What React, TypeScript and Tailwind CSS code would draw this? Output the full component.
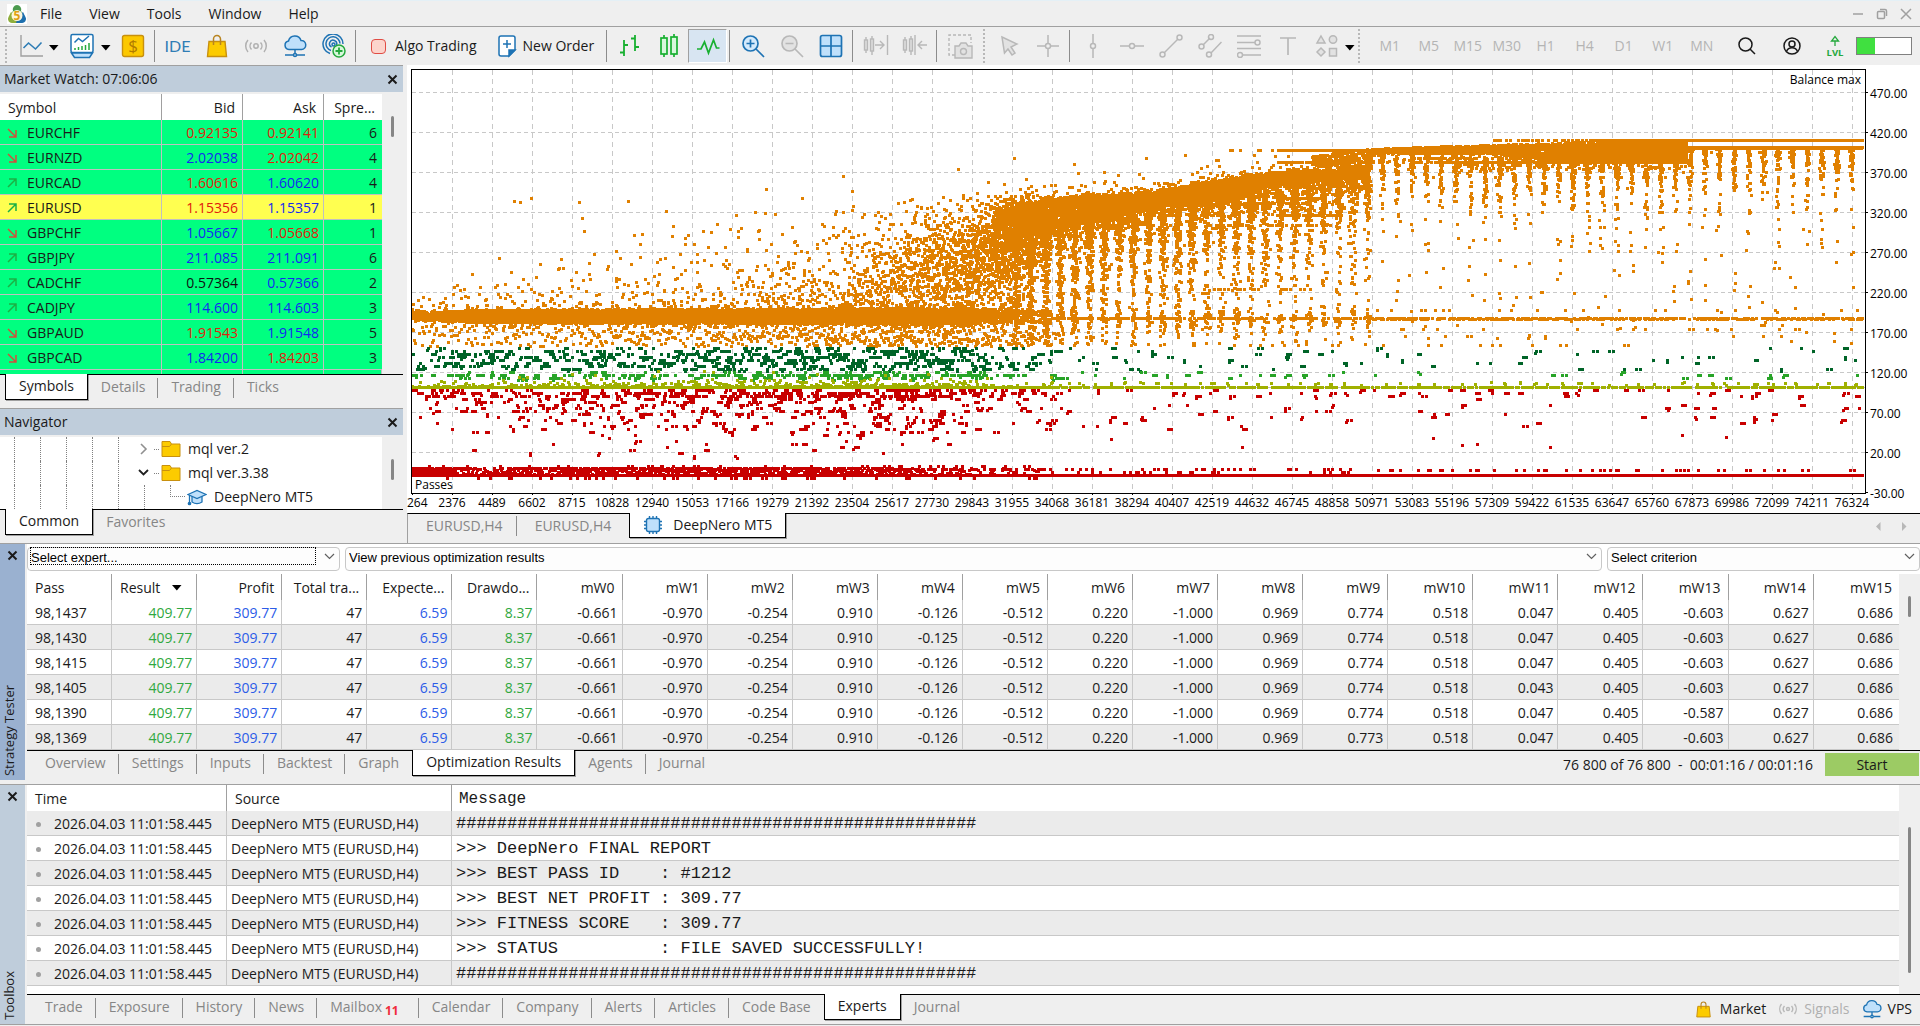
/* ============================================================
   Trading terminal workspace: market watch, navigator,
   optimization chart, strategy tester and toolbox panels.
   ============================================================ */
import { useMemo } from "react";
import type { ReactNode } from "react";

// ── Data ──────────────────────────────────────────────────────
const MENU = ["File", "View", "Tools", "Window", "Help"];
const TIMEFRAMES = ["M1", "M5", "M15", "M30", "H1", "H4", "D1", "W1", "MN"];

type Dir = "up" | "down";
type Tone = "r" | "b" | "k";
const SYMBOLS: [string, Dir, string, Tone, string, Tone, number][] = [
  ["EURCHF", "down", "0.92135", "r", "0.92141", "r", 6],
  ["EURNZD", "down", "2.02038", "b", "2.02042", "r", 4],
  ["EURCAD", "up", "1.60616", "r", "1.60620", "b", 4],
  ["EURUSD", "up", "1.15356", "r", "1.15357", "b", 1],
  ["GBPCHF", "down", "1.05667", "b", "1.05668", "r", 1],
  ["GBPJPY", "up", "211.085", "b", "211.091", "b", 6],
  ["CADCHF", "up", "0.57364", "k", "0.57366", "b", 2],
  ["CADJPY", "up", "114.600", "b", "114.603", "b", 3],
  ["GBPAUD", "down", "1.91543", "r", "1.91548", "b", 5],
  ["GBPCAD", "down", "1.84200", "b", "1.84203", "r", 3],
];
const TONES: Record<Tone, string> = { r: "text-[#e0200c]", b: "text-[#1428f0]", k: "text-[#101010]" };

const PASS_COLUMNS = ["Profit", "Total tra...", "Expecte...", "Drawdo..."];
const WEIGHTS = ["-0.661", "-0.970", "-0.254", "0.910", "-0.126", "-0.512", "0.220", "-1.000", "0.969", "0.774", "0.518", "0.047", "0.405", "-0.603", "0.627", "0.686"];
const PASSES: { id: string; changed: Record<number, string> }[] = [
  { id: "98,1437", changed: {} },
  { id: "98,1430", changed: { 4: "-0.125" } },
  { id: "98,1415", changed: {} },
  { id: "98,1405", changed: { 11: "0.043" } },
  { id: "98,1390", changed: { 13: "-0.587" } },
  { id: "98,1369", changed: { 9: "0.773" } },
];

const HASHES = "#".repeat(51);
const LOG = [
  HASHES,
  ">>> DeepNero FINAL REPORT",
  ">>> BEST PASS ID    : #1212",
  ">>> BEST NET PROFIT : 309.77",
  ">>> FITNESS SCORE   : 309.77",
  ">>> STATUS          : FILE SAVED SUCCESSFULLY!",
  HASHES,
];

const X_LABELS = [264, 2376, 4489, 6602, 8715, 10828, 12940, 15053, 17166, 19279, 21392, 23504, 25617, 27730, 29843, 31955, 34068, 36181, 38294, 40407, 42519, 44632, 46745, 48858, 50971, 53083, 55196, 57309, 59422, 61535, 63647, 65760, 67873, 69986, 72099, 74211, 76324];
const Y_LABELS = [470, 420, 370, 320, 270, 220, 170, 120, 70, 20, -30];

// ── Scatter data ──────────────────────────────────────────────
function makeRng(seed: number) {
  let a = seed;
  return () => {
    a = (a + 0x6d2b79f5) | 0;
    let t = Math.imul(a ^ (a >>> 15), 1 | a);
    t = (t + Math.imul(t ^ (t >>> 7), 61 | t)) ^ t;
    return ((t ^ (t >>> 14)) >>> 0) / 4294967296;
  };
}

// piecewise linear lookup
function at(points: [number, number][], x: number): number {
  if (x <= points[0][0]) return points[0][1];
  for (let i = 1; i < points.length; i++) {
    const [x1, y1] = points[i];
    const [x0, y0] = points[i - 1];
    if (x <= x1) return y0 + ((y1 - y0) * (x - x0)) / (x1 - x0);
  }
  return points[points.length - 1][1];
}

const PLOT_W = 1451;
const COMB = 14.65;

function buildScatter(): Record<string, string> {
  const rnd = makeRng(98143);
  const gauss = () => rnd() + rnd() + rnd() + rnd() - 2;
  const expo = () => -Math.log(1 - rnd() * 0.999);
  const seen = new Set<string>();
  const paths: Record<string, string[]> = { orange: [], dark: [], green: [], olive: [], red: [] };

  const dot = (x: number, v: number, force?: string) => {
    const px = Math.round(x);
    if (px < 0 || px > PLOT_W) return;
    const key = force ?? (v >= 151 ? "orange" : v >= 121 ? "dark" : v >= 111 ? "green" : v > 100 ? "olive" : "red");
    const py = Math.round(27 + (470 - v) * 0.8) - 1;
    const id = `${key}${px},${py}`;
    if (seen.has(id)) return;
    seen.add(id);
    paths[key].push(`M${px + 4} ${py}h3v3h-3z`);
  };
  const line = (from: number, to: number, v: number, fill: number, force?: string) => {
    for (let x = from; x < to; x += 2) if (rnd() < fill) dot(x, v, force);
  };
  // short runs of neighbouring passes that ended on the same balance
  const clump = (x: number, v: number, force?: string) => {
    const level = Math.round(v / 3.75) * 3.75;
    dot(x, level, force);
    if (rnd() < 0.55) dot(x + 2 + rnd() * 2, level, force);
    if (rnd() < 0.25) dot(x + gauss() * 2, level - 3, force);
  };

  // Base band around 190
  for (let x = 0; x < 640; x++) {
    const n = at([[0, 4], [30, 5], [38, 12], [520, 14], [560, 8], [600, 3], [640, 1]], x);
    const half = at([[0, 6], [35, 6], [60, 8], [300, 9], [500, 10], [640, 9]], x);
    for (let i = 0; i < n; i++) dot(x, 190 + (rnd() * 2 - 1) * half);
    if (x < 560) dot(x, 190 + gauss() * 13);
  }

  // Upper cloud, taller and denser towards the convergence point
  for (let x = 0; x < 620; x++) {
    const n = at([[0, 0.3], [60, 0.6], [200, 0.9], [300, 1.5], [400, 2.8], [480, 4.5], [560, 6.5], [600, 5.5], [620, 3]], x);
    const scale = at([[0, 18], [150, 28], [300, 38], [420, 48], [520, 64], [620, 85]], x);
    const top = at([[0, 280], [120, 332], [450, 332], [600, 350]], x);
    const count = Math.floor(n + rnd());
    for (let i = 0; i < count; i++) {
      const v = 192 + expo() * scale;
      if (v < top) dot(x + rnd() * 3, v);
    }
  }
  for (let x = 430; x < 640; x++) {
    const n = at([[430, 0.3], [480, 1.6], [540, 6], [590, 13], [615, 12], [640, 6]], x);
    const c = at([[430, 232], [500, 250], [550, 265], [590, 286], [640, 305]], x);
    const top = at([[430, 330], [600, 342], [640, 342]], x);
    for (let i = 0; i < n; i++) {
      const v = c + gauss() * 48;
      if (v < top) dot(x, v);
    }
  }
  [[102, 334], [108, 333], [119, 337], [167, 333], [216, 334], [254, 321], [354, 349], [431, 365], [440, 346], [390, 337], [546, 374], [602, 387], [576, 357], [592, 355], [614, 361], [662, 380], [734, 387], [666, 369], [692, 370]].forEach(([x, v]) => dot(x, v));

  // Ridge climbing to the plateau
  for (let x = 580; x < 957; x++) {
    const top = at([[580, 320], [610, 332], [660, 340], [740, 346], [790, 357], [860, 370], [957, 375]], x);
    const low = at([[580, 292], [620, 296], [700, 312], [750, 328], [820, 338], [860, 355], [957, 364]], x);
    const n = (top - low) * at([[580, 0.14], [620, 0.35], [680, 0.6], [957, 0.75]], x);
    for (let i = 0; i < n; i++) dot(x, low + rnd() * (top - low));
    if (rnd() < 0.5) dot(x, top + expo() * 7);
    for (let i = 0; i < 3; i++) if (rnd() < 0.75) dot(x, low - expo() * 13);
  }
  line(640, 700, 334, 0.9);
  line(690, 860, 340, 0.95);
  line(700, 900, 331, 0.6);
  line(865, 915, 337, 0.95);
  line(865, 930, 316, 0.95);
  line(735, 830, 316, 0.35);
  line(800, 920, 304, 0.4);
  line(750, 900, 224, 0.28);
  line(850, 957, 352, 0.75);

  // Plateau lines
  line(810, 866, 398, 0.25);
  line(866, 1114, 398, 0.97);
  line(866, 957, 383, 0.9);
  line(957, 1030, 383, 0.35);
  line(1030, 1275, 383, 0.95);
  line(1000, 1200, 388, 0.45);
  for (let x = 900; x < 1275; x++) {
    const top = at([[900, 390], [940, 398], [1000, 401], [1110, 405], [1200, 409], [1275, 409]], x);
    const low = at([[900, 378], [957, 372], [960, 394], [1080, 393], [1150, 384], [1275, 384]], x);
    const n = x < 957 ? 5 : at([[957, 8], [1120, 9], [1180, 12], [1275, 24]], x);
    for (let i = 0; i < n; i++) dot(x, low + rnd() * (top - low));
    if (x > 1040 && rnd() < 0.5) dot(x, 378 + gauss() * 6);
    if (x > 957 && x < 1200 && rnd() < 0.4) dot(x, 383 + rnd() * 12);
  }
  for (let x = 1205; x < 1275; x++) for (let v = 396; v < 410; v += 3) dot(x, v);
  line(1080, 1180, 410, 0.5);
  line(1180, PLOT_W, 410, 1);
  line(1060, PLOT_W, 401, 1);
  line(1275, PLOT_W, 400, 1);
  line(1275, PLOT_W, 395, 0.08);
  line(957, 1300, 364, 0.1);

  // Comb of restarts hanging below the ridge
  for (let c = 0; ; c++) {
    const cx = 604 + c * COMB;
    if (cx > PLOT_W + 2) break;
    const x = Math.min(cx, PLOT_W - 1);
    const ridge = at([[600, 300], [700, 318], [800, 338], [950, 362], [960, 392], [1270, 384], [1275, 400], [1451, 400]], x);
    const dense = x < 957 ? at([[600, 160], [700, 130], [850, 90], [957, 65]], x) : 44;
    const fall = x < 957 ? at([[600, 60], [760, 40], [957, 32]], x) : 24;
    const reach = 0.7 + rnd() * 0.6;
    for (let i = 0; i < dense; i++) {
      const v = ridge - expo() * fall * reach;
      if (v > 155) dot(x + gauss() * (x < 957 ? 3.4 : 1.8), v);
    }
    const spread = x < 957 ? at([[600, 40], [957, 22]], x) : 6;
    for (let i = 0; i < spread; i++) dot(x + gauss() * 2.8, 153 + rnd() * (ridge - 155));
    if (x < 957) for (let i = 0; i < 10; i++) dot(x + gauss() * 3, 187 + gauss() * 10);
  }

  // Lower orange fringe
  for (let x = 0; x < 650; x++) {
    const n = at([[0, 0.6], [300, 1], [540, 1.9], [600, 1.2], [650, 0.4]], x);
    const count = Math.floor(n + rnd());
    for (let i = 0; i < count; i++) dot(x, 152 + rnd() * 28);
  }
  line(640, PLOT_W, 187, 0.72);
  line(957, PLOT_W, 186, 0.6);
  line(957, PLOT_W, 174, 0.09);
  line(957, PLOT_W, 198, 0.06);
  line(740, 1300, 154, 0.04);
  line(957, 1400, 165, 0.04);

  // Values between 100 and 150, then the losing passes
  for (let x = 0; x < 650; x++) {
    const k = at([[0, 0.6], [70, 0.8], [200, 1], [300, 1.15], [450, 1.5], [540, 1.3], [590, 0.75], [650, 0.25]], x);
    if (rnd() < k * 0.72) clump(x, 123 + rnd() * 27, "dark");
    if (rnd() < k * 0.3) clump(x, 113 + rnd() * 6, "green");
    if (rnd() < k * 0.6) dot(x, 101 + expo() * 3.5, "olive");
    if (rnd() < k * 0.16) clump(x, 98 - rnd() * 9, "red");
    if (rnd() < k * 0.5) {
      const v = 98 - expo() * 24;
      if (v > 8) clump(x, v, "red");
    }
    if (rnd() < k * 0.22) clump(x, 96 - rnd() * 52, "red");
  }
  for (let c = 0; c < 56; c++) {
    const x = 640 + c * COMB;
    const fade = c < 22 ? 1 : 0.7;
    for (let i = 0; i < 2; i++) {
      if (rnd() < 0.6 * fade) clump(x + gauss() * 3, 123 + rnd() * 27, "dark");
      if (rnd() < 0.4 * fade) clump(x + gauss() * 3, 113 + rnd() * 6, "green");
      if (rnd() < 0.7) dot(x + gauss() * 3, 104 + rnd() * 3, "olive");
      if (rnd() < 0.6 * fade) clump(x + gauss() * 3, 98 - rnd() * 10, "red");
      if (rnd() < 0.6 * fade) clump(x + gauss() * 3, 80 - rnd() * 30, "red");
    }
    if (rnd() < 0.14) dot(x, 25 + rnd() * 20);
  }
  line(0, 640, 101, 1, "olive");
  line(640, PLOT_W, 101, 0.86, "olive");

  // Floor
  for (let x = 0; x < 640; x++) {
    const n = at([[0, 9], [40, 9], [44, 0.9], [140, 1.1], [300, 1.3], [500, 1.1], [560, 0.4], [640, 0.1]], x);
    const count = Math.floor(n + rnd());
    for (let i = 0; i < count; i++) dot(x, 0 - rnd() * 9);
    if (rnd() < 0.06) dot(x, 3);
    if (rnd() < 0.06) dot(x, -12);
  }
  line(0, 480, 0, 0.75);
  line(480, 640, -1, 0.5);
  line(640, 960, -1, 0.25);
  line(960, PLOT_W, -3, 0.24);
  line(640, 960, -5, 0.16);
  line(0, PLOT_W, -9, 1);
  line(1, PLOT_W, -9, 0.7);

  return Object.fromEntries(Object.entries(paths).map(([k, list]) => [k, list.join("")]));
}

function OptimizationChart() {
  const scatter = useMemo(buildScatter, []);
  return (
    <svg viewBox="0 0 1513 448" className="block h-auto w-full bg-white font-['Open_Sans',sans-serif]" role="img" aria-label="Optimization results">
      <g stroke="#c8c8c8" shapeRendering="crispEdges">
        {X_LABELS.slice(1).map((n, i) => (
          <line key={n} x1={45.5 + i * 40} x2={45.5 + i * 40} y1={5} y2={428} strokeDasharray="5 4" />
        ))}
        {Y_LABELS.slice(0, 10).map((n, i) => (
          <line key={n} x1={5} x2={1459} y1={27.5 + i * 40} y2={27.5 + i * 40} strokeDasharray="4 3" />
        ))}
        <line x1={5} x2={1459} y1={322.5} y2={322.5} stroke="#c0b8c8" />
      </g>
      <g shapeRendering="crispEdges">
        <path d={scatter.orange} fill="#e08000" />
        <path d={scatter.dark} fill="#006428" />
        <path d={scatter.green} fill="#28a428" />
        <path d={scatter.red} fill="#c80000" />
        <path d={scatter.olive} fill="#a0b000" />
      </g>
      <g stroke="#000" shapeRendering="crispEdges">
        <path d="M4.5 4.5H1458.5V428.5H4.5Z" fill="none" />
        {X_LABELS.map((n, i) => <path key={n} d={`M${5.5 + i * 40} 428v2`} />)}
        {Y_LABELS.map((n, i) => <path key={n} d={`M1459 ${27.5 + i * 40}h2`} />)}
      </g>
      <g fill="#000" fontSize={12}>
        <text x={1454} y={19} textAnchor="end">Balance max</text>
        <text x={8} y={424}>Passes</text>
        <text x={0} y={442}>{X_LABELS[0]}</text>
        {X_LABELS.slice(1).map((n, i) => <text key={n} x={45 + i * 40} y={442} textAnchor="middle">{n}</text>)}
        {Y_LABELS.map((n, i) => <text key={n} x={1463} y={33 + i * 40}>{n.toFixed(2)}</text>)}
      </g>
    </svg>
  );
}

// ── Icons ─────────────────────────────────────────────────────
function Svg({ w = 24, h = 24, children, stroke = "#b8b8b8", fill = "none", sw = 1.4 }: {
  w?: number; h?: number; children: ReactNode; stroke?: string; fill?: string; sw?: number;
}) {
  return (
    <svg width={w} height={h} viewBox={`0 0 ${w} ${h}`} fill={fill} stroke={stroke} strokeWidth={sw} className="shrink-0" aria-hidden="true">
      {children}
    </svg>
  );
}

function Logo() {
  return (
    <Svg w={20} h={20} stroke="none">
      <rect width="20" height="20" fill="#fff" />
      <path d="M10 1a4.500 4.500 0 0 1 4 6l3 4-4 2-7 0-3-2 3-4a4.500 4.500 0 0 1 4-6z" fill="#4b9a4e" />
      <path d="M4 8l-2.500 5a4 4 0 0 0 4 6h5l-1-6z" fill="#8fae3c" />
      <path d="M16 8l2.500 5a4 4 0 0 1-4 6H9l2-6z" fill="#1d6fae" />
      <circle cx="10" cy="11.500" r="5.500" fill="#fdf6dc" />
      <text x="10" y="16" textAnchor="middle" fontSize="12" fontWeight="700" fill="#e0a010">5</text>
    </Svg>
  );
}

function CloseIcon() {
  return <Svg w={11} h={11} stroke="#1a1a1a" sw={2}><path d="M1.500 1.500l8 8M9.500 1.500l-8 8" /></Svg>;
}

function Bag({ size = 24 }: { size?: number }) {
  return (
    <svg width={size} height={size} viewBox="0 0 24 24" className="shrink-0" aria-hidden="true">
      <path d="M4 7.500h16l1.500 15h-19z" fill="#fccb00" stroke="#c8900e" strokeWidth="1.400" />
      <path d="M8.500 11V5a3.500 3.500 0 0 1 7 0v6" fill="none" stroke="#b88420" strokeWidth="1.500" />
    </svg>
  );
}

function Signal() {
  return (
    <Svg stroke="#b0b0b0" sw={1.500}>
      <circle cx="12" cy="12" r="2.200" />
      <path d="M7.500 8.500a5 5 0 0 0 0 7M16.500 8.500a5 5 0 0 1 0 7M4 6a9 9 0 0 0 0 12M20 6a9 9 0 0 1 0 12" />
    </Svg>
  );
}

function Cloud() {
  return (
    <Svg stroke="#1e73b4" sw={1.500}>
      <path d="M6 15.500a4.300 4.300 0 0 1-.5-8.500 6.500 6.500 0 0 1 12.500-.5 4.500 4.500 0 0 1 .5 9z" fill="#bfe0fb" />
      <path d="M12 15.500v4M2 21h8M14 21h8" />
      <circle cx="12" cy="21" r="1.500" />
    </Svg>
  );
}

function Caret() {
  return <Svg w={10} h={6} stroke="none" fill="#000"><path d="M0 0h9.500L4.800 5.500z" /></Svg>;
}

function Folder() {
  return (
    <Svg w={20} h={18} stroke="#c8900e" sw={1}>
      <path d="M1 1.500h8l1.500 2.500H19v12.500H1z" fill="#fccb00" />
      <path d="M1 6.500h7.500L10.500 4" />
    </Svg>
  );
}

// ── Shared parts ──────────────────────────────────────────────
function ToolButton({ label, children, wide = "w-[39px]", on }: { label: string; children: ReactNode; wide?: string; on?: boolean }) {
  return (
    <button
      aria-label={label}
      className={`flex h-[34px] shrink-0 items-center justify-center ${wide} ${on ? "border-b border-l border-r border-t border-b-white border-l-[#a0a0a0] border-r-white border-t-[#a0a0a0] bg-[#d8e5f2]" : ""}`}
    >
      {children}
    </button>
  );
}

function Divider() {
  return <span className="mx-0.5 h-8 w-0.5 shrink-0 border-l border-[#8c8c8c]" />;
}

function Grip() {
  return <span className="mx-1 h-[34px] w-0 shrink-0 border-l-2 border-dotted border-[#b8b8b8]" />;
}

function Tabs({ items, active, height, badge, end }: {
  items: string[]; active: number; height: string; badge?: Record<string, number>; end?: ReactNode;
}) {
  return (
    <div className={`flex items-start justify-between border-t border-black bg-[#efefef] ${height}`}>
      <div className="flex pl-[5px]" role="tablist">
        {items.map((t, i) =>
          i === active ? (
            <button key={t} role="tab" aria-selected="true" className="-mt-px h-[26px] border-x border-b border-black bg-white px-[13px] pb-0.5 text-sm/5 shadow-[1px_1px_0_#a0a0a0]">
              {t}
            </button>
          ) : (
            <button key={t} role="tab" aria-selected="false" className="relative mt-[3px] flex h-5 items-center pb-0.5 text-sm/5 text-[#868686]">
              <span className="px-[13px]">{t}</span>
              {badge?.[t] && <span className="-ml-2.5 mr-5 mt-2 text-xs font-bold text-[#f02c3c]">{badge[t]}</span>}
              {i + 1 !== active && i + 1 < items.length && <span className="absolute right-0 top-0 h-5 w-px bg-[#8c8c8c]" />}
            </button>
          ),
        )}
      </div>
      {end}
    </div>
  );
}

function PanelTitle({ title }: { title: string }) {
  return (
    <div className="flex h-[27px] items-center justify-between border-t border-[#a0a0a0] bg-[#bfcddb] pl-1 pr-[5px] text-sm">
      <h2>{title}</h2>
      <button aria-label={`Close ${title}`}><CloseIcon /></button>
    </div>
  );
}

function Scroll({ thumb }: { thumb: string }) {
  return (
    <div className="flex w-[21px] shrink-0 justify-center bg-[#efefef]">
      <span className={`w-[3px] rounded-full bg-[#868686] ${thumb}`} />
    </div>
  );
}

function SideTitle({ title, color }: { title: string; color: string }) {
  return (
    <div className={`flex w-[25px] shrink-0 flex-col items-center justify-between pb-1 pt-1.5 ${color}`}>
      <button aria-label={`Close ${title}`}><CloseIcon /></button>
      <h2 className="rotate-180 self-start text-[13px] [writing-mode:vertical-rl]">{title}</h2>
    </div>
  );
}

function Combo({ label, focused }: { label: string; focused?: boolean }) {
  return (
    <div className="relative h-6">
      <select aria-label={label} className="h-full w-full appearance-none rounded-sm border border-[#c8c8c8] bg-[#fdfdfd] px-[3px] pb-0.5 font-['Liberation_Sans',Arial,sans-serif] text-[13px] text-black outline-none">
        <option>{label}</option>
      </select>
      {focused && <span className="pointer-events-none absolute bottom-[3px] left-[3px] right-6 top-[3px] border border-dotted border-black" />}
      <span className="pointer-events-none absolute right-[5px] top-[9px]">
        <Svg w={11} h={7} stroke="#606060" sw={1.200}><path d="M1 1l4.500 4.500L10 1" /></Svg>
      </span>
    </div>
  );
}

// ── Toolbar ───────────────────────────────────────────────────
function Toolbar() {
  return (
    <div className="flex h-[38px] items-center bg-[#efefef] pl-px">
      <Grip />
      <ToolButton label="Charts">
        <Svg><path d="M2 1v21h22" stroke="#a0a0a0" /><path d="M4.500 14l5-5 7 6 6-6.500" stroke="#2f7db5" strokeWidth={1.600} /></Svg>
      </ToolButton>
      <button aria-label="Chart list" className="mr-1 flex h-8 w-2 items-center justify-center pt-1"><Caret /></button>
      <ToolButton label="Profiles">
        <Svg w={26} h={26} stroke="#1e73b4" sw={1.500}>
          <rect x="2" y="1.500" width="22" height="18" rx="1.500" fill="#fff" />
          <path d="M2.500 20l3 4.500h15l3-4.500z" fill="#bfe0fb" />
          <path d="M5.500 9.500l4-4 4 3 6.500-5.500" />
          <path d="M6 17v-2M9.500 17v-3M13 17v-4M16.500 17v-5M20 17v-7" stroke="#24a83c" />
        </Svg>
      </ToolButton>
      <button aria-label="Profile list" className="mr-0.5 flex h-8 w-2.5 items-center justify-center pt-1"><Caret /></button>
      <ToolButton label="Deposit">
        <Svg stroke="#c8900e">
          <rect x="1.500" y="1.500" width="21" height="21" rx="2" fill="#fcc800" />
          <text x="12" y="18" textAnchor="middle" fontSize="17" fill="#b07a00" stroke="none">$</text>
        </Svg>
      </ToolButton>
      <Divider />
      <ToolButton label="IDE"><span className="font-['Lato',sans-serif] text-base text-[#2f7db5]">IDE</span></ToolButton>
      <ToolButton label="Market"><Bag /></ToolButton>
      <ToolButton label="Signals"><Signal /></ToolButton>
      <ToolButton label="VPS"><Cloud /></ToolButton>
      <ToolButton label="Network">
        <Svg stroke="#1e73b4" sw={1.500}>
          <path d="M8 19.500A10 10 0 1 1 21 10M9 16.500A7 7 0 1 1 18 9.500M9.500 13a3.600 3.600 0 1 1 5-2" />
          <circle cx="11.500" cy="10.500" r="1.500" />
          <circle cx="17" cy="17" r="6" fill="#d8f8dc" stroke="#24a83c" />
          <path d="M17 13.500v7M13.500 17h7" stroke="#24a83c" strokeWidth={1.800} />
        </Svg>
      </ToolButton>
      <Divider />
      <button className="flex h-8 shrink-0 items-center gap-[9px] pl-3 pr-3.5 text-sm">
        <span className="size-[15px] rounded-sm border border-[#e04c44] bg-[#fcd4cc]" />
        Algo Trading
      </button>
      <button className="flex h-8 shrink-0 items-center gap-1.5 pl-1.5 pr-2 text-sm">
        <Svg w={20} h={24} stroke="#1e73b4" sw={1.500}>
          <path d="M4 2h12a2 2 0 0 1 2 2v12l-6 6H4a2 2 0 0 1-2-2V4a2 2 0 0 1 2-2z" fill="#fff" />
          <path d="M12 22v-6h6z" fill="#1e73b4" />
          <path d="M10 6v8M6 10h8" />
        </Svg>
        New Order
      </button>
      <span className="w-0.5" />
      <Divider />
      <ToolButton label="Bar chart">
        <Svg stroke="#18b030" sw={1.800}><path d="M6 6v16M6 11h4M2 18.500h4M17 1v16M13 4.500h4M17 13h4" /></Svg>
      </ToolButton>
      <ToolButton label="Candlesticks">
        <Svg stroke="#18b030" sw={1.700}><path d="M7 1v22M17 0v23" /><rect x="4" y="4" width="6" height="16" fill="#d8f8dc" /><rect x="14" y="3" width="6" height="17" fill="#d8f8dc" /></Svg>
      </ToolButton>
      <ToolButton label="Line chart" on>
        <Svg stroke="#18b030" sw={1.700}><path d="M1 15h4l3.500-7 4 11 5-13 3 8h3" /></Svg>
      </ToolButton>
      <Divider />
      <ToolButton label="Zoom in">
        <Svg stroke="#1e73b4" sw={1.700}><circle cx="9.500" cy="9.500" r="7.500" fill="#d4eafc" /><path d="M15 15l8 8M9.500 5.500v8M5.500 9.500h8" /></Svg>
      </ToolButton>
      <ToolButton label="Zoom out">
        <Svg sw={1.700}><circle cx="9.500" cy="9.500" r="7.500" fill="#e2e2e2" /><path d="M15 15l8 8M5.500 9.500h8" /></Svg>
      </ToolButton>
      <ToolButton label="Tile windows">
        <Svg stroke="#1e73b4" sw={1.700}><rect x="1.500" y="1.500" width="21" height="21" rx="2" fill="#bfe0fb" /><path d="M12 1.500v21M1.500 12h21" /></Svg>
      </ToolButton>
      <Divider />
      <ToolButton label="Scroll to end">
        <Svg w={26} sw={1.400}><path d="M3 3v16M9 2v19M12 11h9M17 7l4 4-4 4M24.500 1v20" /><rect x="1.500" y="6" width="3" height="10" fill="#ddd" /><rect x="7.500" y="5" width="3" height="12" fill="#ddd" /></Svg>
      </ToolButton>
      <ToolButton label="Chart shift">
        <Svg w={26} sw={1.400}><path d="M3 3v16M9 2v19M16 11h9M20 7l-4 4 4 4M13 1v20" /><rect x="1.500" y="6" width="3" height="10" fill="#ddd" /><rect x="7.500" y="5" width="3" height="12" fill="#ddd" /></Svg>
      </ToolButton>
      <Divider />
      <ToolButton label="Screenshot">
        <Svg w={26} h={26} sw={1.400}>
          <path d="M8 22H2V2h22v8" strokeDasharray="3 2" />
          <path d="M8 13h4l2-3h5l2 3h4v12H8z" fill="#e2e2e2" />
          <circle cx="16.500" cy="18.500" r="3" />
        </Svg>
      </ToolButton>
      <Grip />
      <ToolButton label="Cursor">
        <Svg sw={1.500}><path d="M5 3l15 7-6 3 4 6-3 2-4-6-3.500 4z" fill="#e2e2e2" /></Svg>
      </ToolButton>
      <ToolButton label="Crosshair">
        <Svg sw={1.500}><path d="M12 1v8M12 15v8M1 12h8M15 12h8" /><circle cx="12" cy="12" r="2.500" /></Svg>
      </ToolButton>
      <Divider />
      <ToolButton label="Vertical line">
        <Svg sw={1.500}><path d="M12 0v9M12 15v9" /><circle cx="12" cy="12" r="2.500" /></Svg>
      </ToolButton>
      <ToolButton label="Horizontal line">
        <Svg sw={1.500}><path d="M0 12h9M15 12h9" /><circle cx="12" cy="12" r="2.500" /></Svg>
      </ToolButton>
      <ToolButton label="Trendline">
        <Svg sw={1.500}><path d="M5 19L19 5" /><circle cx="3.500" cy="20.500" r="2.500" /><circle cx="20.500" cy="3.500" r="2.500" /></Svg>
      </ToolButton>
      <ToolButton label="Channel">
        <Svg sw={1.500}><path d="M5 11l7-7M13 19L23.500 8" /><circle cx="3.500" cy="12.500" r="2.500" /><circle cx="13" cy="3" r="2.500" /><circle cx="11" cy="20.500" r="2.500" /></Svg>
      </ToolButton>
      <ToolButton label="Fibonacci">
        <Svg sw={1.500}><path d="M0 2h24M0 8.500h18M0 14.500h24M6 21h18" /><circle cx="20.500" cy="8.500" r="2.500" /><circle cx="3" cy="21" r="2.500" /></Svg>
      </ToolButton>
      <ToolButton label="Text">
        <Svg sw={1.700}><path d="M4 4h16M12 4v17" /></Svg>
      </ToolButton>
      <ToolButton label="Shapes">
        <Svg sw={1.500}><path d="M6 2l4 7H2zM6 14l4 4-4 4-4-4z" fill="#e2e2e2" /><circle cx="18" cy="5.500" r="3.700" fill="#e2e2e2" /><rect x="14.500" y="14.500" width="7" height="7.500" fill="#e2e2e2" /></Svg>
      </ToolButton>
      <button aria-label="Shape list" className="flex h-8 w-2 items-center justify-center pt-1"><Caret /></button>
      <Grip />
      <div className="ml-1.5 flex">
        {TIMEFRAMES.map((t) => (
          <button key={t} className="w-[39px] text-center text-sm text-[#b4b4b4]">{t}</button>
        ))}
      </div>
      <div className="ml-auto flex items-center pr-2">
        <ToolButton label="Search" wide="w-[46px]">
          <Svg w={20} h={20} stroke="#1a1a1a" sw={1.500}><circle cx="8.500" cy="8.500" r="6.500" /><path d="M13 13l5 5" /></Svg>
        </ToolButton>
        <ToolButton label="Account" wide="w-[44px]">
          <Svg w={20} h={20} stroke="#1a1a1a" sw={1.500}><circle cx="10" cy="10" r="8" /><circle cx="10" cy="8" r="3" /><path d="M4.500 15.500c2-5 9-5 11 0" /></Svg>
        </ToolButton>
        <ToolButton label="Level" wide="w-[42px]">
          <Svg w={20} h={24} stroke="#24a83c" sw={1.300}>
            <path d="M10 12V7H6.500L10 2.500 13.500 7H10" />
            <text x="10" y="22" textAnchor="middle" fontSize="9.500" fontWeight="700" fill="#24a83c" stroke="none">LVL</text>
          </Svg>
        </ToolButton>
        <div className="h-[18px] w-14 border border-[#808080] bg-white"><div className="h-full w-1/3 bg-[#40e040]" /></div>
      </div>
    </div>
  );
}

// ── Left column ───────────────────────────────────────────────
function MarketWatch() {
  const head = "h-[26px] border-r border-[#a0a0a0] bg-white pt-0.5 font-normal last:border-r-0";
  return (
    <section>
      <PanelTitle title="Market Watch: 07:06:06" />
      <div className="flex bg-[#efefef] pt-0.5">
        <table className="flex-1 table-fixed border-separate border-spacing-0 text-sm">
          <thead>
            <tr>
              <th className={`w-[162px] pl-2 text-left ${head}`}>Symbol</th>
              <th className={`w-[81px] pr-[7px] text-right ${head}`}>Bid</th>
              <th className={`w-[81px] pr-[7px] text-right ${head}`}>Ask</th>
              <th className={`w-[58px] pr-[7px] text-right ${head}`}>Spre...</th>
            </tr>
          </thead>
          <tbody>
            {SYMBOLS.map(([name, dir, bid, bt, ask, at2, spread]) => (
              <tr key={name} className={`[&>td]:h-[25px] [&>td]:border-b [&>td]:border-r [&>td]:border-[#c0c0c0] [&>td]:pt-0.5 [&>td:last-child]:border-r-0 ${name === "EURUSD" ? "bg-[#ffff50]" : "bg-[#00ff80]"}`}>
                <td className="pl-[7px]">
                  <span className="flex items-center gap-2.5">
                    <Svg w={10} h={10} stroke={dir === "up" ? "#1cb044" : "#d0503c"} sw={1.500}>
                      <path d={dir === "up" ? "M1 9l8-8M2 1h7v7" : "M1 1l8 8M9 2v7H2"} />
                    </Svg>
                    {name}
                  </span>
                </td>
                <td className={`pr-1 text-right ${TONES[bt]}`}>{bid}</td>
                <td className={`pr-1 text-right ${TONES[at2]}`}>{ask}</td>
                <td className="pr-[5px] text-right">{spread}</td>
              </tr>
            ))}
            <tr className="bg-[#00ff80] [&>td]:h-1 [&>td]:border-r [&>td]:border-[#c0c0c0]">
              <td /><td /><td /><td />
            </tr>
          </tbody>
        </table>
        <Scroll thumb="mt-[22px] h-[21px]" />
      </div>
      <Tabs items={["Symbols", "Details", "Trading", "Ticks"]} active={0} height="h-[34px]" />
    </section>
  );
}

function TreeRow({ label, children }: { label: string; children: ReactNode }) {
  return (
    <li className="flex h-6 items-stretch pl-3.5 text-sm">
      {[0, 1, 2, 3, 4].map((n) => <span key={n} className="w-[26px] shrink-0 border-l border-dotted border-[#808080]" />)}
      <span className="flex items-center">{children}<span className="pl-[7px]">{label}</span></span>
    </li>
  );
}

function Navigator() {
  return (
    <section>
      <PanelTitle title="Navigator" />
      <div className="flex border-t-2 border-[#efefef] bg-white">
        <ul className="flex-1">
          <TreeRow label="mql ver.2">
            <span className="-ml-1 flex w-3.5"><Svg w={8} h={12} stroke="#909090" sw={1.600}><path d="M1 1l5 5-5 5" /></Svg></span>
            <span className="mr-0.5 w-[5px] border-t border-dotted border-[#808080]" />
            <Folder />
          </TreeRow>
          <TreeRow label="mql ver.3.38">
            <span className="-ml-1.5 flex w-4"><Svg w={11} h={8} stroke="#202020" sw={1.800}><path d="M1 1l4.500 4.500L10 1" /></Svg></span>
            <span className="mr-0.5 w-[5px] border-t border-dotted border-[#808080]" />
            <Folder />
          </TreeRow>
          <TreeRow label="DeepNero MT5">
            <span className="h-full w-[26px] border-l border-dotted border-[#808080]" />
            <span className="mr-0.5 h-3 w-[15px] self-start border-b border-l border-dotted border-[#808080]" />
            <Svg w={20} h={17} stroke="#1e73b4" sw={1.300}>
              <path d="M5 7v6c3 2 7 2 10 0V7" fill="#bfe0fb" />
              <path d="M1 5.500L10 1.500l9 4-9 4z" fill="#bfe0fb" />
              <path d="M2.500 6v7" />
              <circle cx="2.500" cy="14.500" r="1.200" fill="#1e73b4" />
            </Svg>
          </TreeRow>
        </ul>
        <Scroll thumb="mt-[22px] h-[21px]" />
      </div>
      <Tabs items={["Common", "Favorites"]} active={0} height="h-[34px]" />
    </section>
  );
}

// ── Chart area ────────────────────────────────────────────────
function ChartTabs() {
  return (
    <div className="flex flex-1 items-start justify-between border-l border-t border-l-[#a0a0a0] border-t-black bg-[#efefef]">
      <div className="flex pl-[5px] text-sm/5" role="tablist">
        <button role="tab" aria-selected="false" className="mt-0.5 h-5 border-r border-[#8c8c8c] px-[13px] text-[#868686]">EURUSD,H4</button>
        <button role="tab" aria-selected="false" className="mt-0.5 h-5 pl-[18px] pr-[18px] text-[#868686]">EURUSD,H4</button>
        <button role="tab" aria-selected="true" className="-mt-px flex h-[25px] items-center gap-2.5 border-x border-b border-black bg-white pl-[13px] pr-[13px] shadow-[1px_1px_0_#a0a0a0]">
          <Svg w={20} h={20} stroke="#1e73b4" sw={1.400}>
            <path d="M6.500 1v18M10 1v18M13.500 1v18M1 6.500h18M1 10h18M1 13.500h18" />
            <rect x="3.500" y="3.500" width="13" height="13" rx="2" fill="#bfe0fb" />
          </Svg>
          DeepNero MT5
        </button>
      </div>
      <div className="flex gap-5 pr-3 pt-2">
        <button aria-label="Previous tab"><Svg w={6} h={9} stroke="none" fill="#b8b8b8"><path d="M4.500 0v9L0 4.500z" /></Svg></button>
        <button aria-label="Next tab"><Svg w={6} h={9} stroke="none" fill="#b8b8b8"><path d="M0 0v9l4.500-4.500z" /></Svg></button>
      </div>
    </div>
  );
}

// ── Bottom panels ─────────────────────────────────────────────
function StrategyTester() {
  return (
    <section className="flex border-t border-[#a0a0a0] bg-[#efefef]">
      <div className="flex pb-1"><SideTitle title="Strategy Tester" color="bg-[#9ab1d0]" /></div>
      <div className="ml-0.5 min-w-0 flex-1">
        <div className="bg-white pb-1.5">
          <div className="grid grid-cols-[313px_1fr_313px] gap-[5px]">
            <Combo label="Select expert..." focused />
            <Combo label="View previous optimization results" />
            <Combo label="Select criterion" />
          </div>
        </div>
        <div className="flex bg-white">
          <table className="w-full table-fixed border-separate border-spacing-0 text-right text-sm">
            <thead>
              <tr className="[&>th]:h-[26px] [&>th]:border-r [&>th]:border-[#a0a0a0] [&>th]:pt-0.5 [&>th]:font-normal [&>th:last-child]:border-r-0">
                <th className="pl-2 text-left">Pass</th>
                <th className="pl-2 text-left"><span className="flex items-center gap-3">Result <Caret /></span></th>
                {PASS_COLUMNS.map((c) => <th key={c} className="whitespace-nowrap pr-[7px]">{c}</th>)}
                {WEIGHTS.map((_, i) => <th key={i} className="pr-[7px]">mW{i}</th>)}
              </tr>
            </thead>
            <tbody>
              {PASSES.map((p) => (
                <tr key={p.id} className="even:bg-[#ebebeb] [&>td]:h-[25px] [&>td]:border-b [&>td]:border-r [&>td]:border-[#c8c8c8] [&>td]:pr-1 [&>td]:pt-0.5 [&>td:last-child]:border-r-0 [&>td:last-child]:pr-1.5">
                  <td className="pl-2 text-left">{p.id}</td>
                  <td className="text-[#30a840]">409.77</td>
                  <td className="text-[#2c5ce8]">309.77</td>
                  <td>47</td>
                  <td className="text-[#2c5ce8]">6.59</td>
                  <td className="text-[#30a840]">8.37</td>
                  {WEIGHTS.map((w, i) => <td key={i}>{p.changed[i] ?? w}</td>)}
                </tr>
              ))}
            </tbody>
          </table>
          <Scroll thumb="mt-[22px] h-[21px]" />
        </div>
        <Tabs
          items={["Overview", "Settings", "Inputs", "Backtest", "Graph", "Optimization Results", "Agents", "Journal"]}
          active={5}
          height="h-[34px]"
          end={
            <div className="flex items-center gap-3 pr-px pt-0.5 text-sm">
              <span className="whitespace-pre">{"76 800 of 76 800  -  00:01:16 / 00:01:16"}</span>
              <button className="h-[23px] w-[94px] bg-[#9ccb64]">Start</button>
            </div>
          }
        />
      </div>
    </section>
  );
}

function Toolbox() {
  return (
    <section className="flex border-b border-t border-[#a0a0a0] bg-[#efefef]">
      <SideTitle title="Toolbox" color="bg-[#bfcddb]" />
      <div className="ml-0.5 min-w-0 flex-1">
        <div className="flex bg-white">
          <div className="min-w-0 flex-1 pb-2">
            <table className="w-full table-fixed border-separate border-spacing-0 text-left text-sm">
              <thead>
                <tr className="[&>th]:h-[26px] [&>th]:border-r [&>th]:border-[#a0a0a0] [&>th]:pt-0.5 [&>th]:font-normal [&>th:last-child]:border-r-0">
                  <th className="w-[200px] pl-2">Time</th>
                  <th className="w-[225px] pl-2">Source</th>
                  <th className="pl-[7px] font-['Liberation_Mono',monospace] text-base/5">Message</th>
                </tr>
              </thead>
              <tbody>
                {LOG.map((m, i) => (
                  <tr key={i} className="odd:bg-[#ebebeb] [&>td]:h-[25px] [&>td]:border-b [&>td]:border-r [&>td]:border-[#c8c8c8] [&>td]:pt-0.5 [&>td:last-child]:border-r-0">
                    <td className="pl-[9px]">
                      <span className="flex items-center gap-[13px]"><span className="size-[5px] rounded-full bg-[#a0a0a0]" />2026.04.03 11:01:58.445</span>
                    </td>
                    <td className="pl-1">DeepNero MT5 (EURUSD,H4)</td>
                    <td className="whitespace-pre pl-1 font-['Liberation_Mono',monospace] text-[17px]/5">{m}</td>
                  </tr>
                ))}
              </tbody>
            </table>
          </div>
          <Scroll thumb="mb-[21px] mt-[42px]" />
        </div>
        <Tabs
          items={["Trade", "Exposure", "History", "News", "Mailbox", "Calendar", "Company", "Alerts", "Articles", "Code Base", "Experts", "Journal"]}
          active={10}
          height="h-[30px]"
          badge={{ Mailbox: 11 }}
          end={
            <div className="flex items-center gap-3 pr-2 pt-1 text-sm">
              <button className="flex items-center gap-2"><Bag size={17} />Market</button>
              <button className="flex items-center gap-1.5 text-[#b0b0b0]"><Svg w={20} h={20} stroke="#b8b8b8"><circle cx="10" cy="10" r="1.500" /><path d="M6.500 7a4.500 4.500 0 0 0 0 6M13.500 7a4.500 4.500 0 0 1 0 6M3.500 5a8 8 0 0 0 0 10M16.500 5a8 8 0 0 1 0 10" /></Svg>Signals</button>
              <button className="flex items-center gap-1.5">
                <svg width="20" height="20" viewBox="0 0 24 24" fill="none" stroke="#1e73b4" strokeWidth="1.600" aria-hidden="true">
                  <path d="M6 15.500a4.300 4.300 0 0 1-.5-8.500 6.500 6.500 0 0 1 12.500-.5 4.500 4.500 0 0 1 .5 9z" fill="#bfe0fb" />
                  <path d="M12 15.500v4M2 21h8M14 21h8" />
                  <circle cx="12" cy="21" r="1.500" />
                </svg>
                VPS
              </button>
            </div>
          }
        />
      </div>
    </section>
  );
}

// ── Main component ────────────────────────────────────────────
export default function App() {
  return (
    <div className="flex min-h-screen flex-col bg-[#efefef] font-['Open_Sans','Noto_Sans',sans-serif] text-[#1a1a1a]">
      <header className="flex h-[27px] items-center justify-between border-b border-t border-b-[#a0a0a0] border-t-[#e4f0f6] pl-[7px] pr-2">
        <div className="flex items-center">
          <Logo />
          <nav className="flex gap-px text-sm">
            {MENU.map((m) => <button key={m} className="px-[13px]">{m}</button>)}
          </nav>
        </div>
        <div className="flex items-center gap-3">
          <button aria-label="Minimize"><Svg w={12} h={12} stroke="#a0a0a0" sw={1.500}><path d="M1 6h10" /></Svg></button>
          <button aria-label="Restore"><Svg w={12} h={12} stroke="#a0a0a0" sw={1.500}><rect x="1.500" y="3.500" width="7" height="7" rx="1" /><path d="M4 1.500h5a1.500 1.500 0 0 1 1.500 1.500v5" /></Svg></button>
          <button aria-label="Close"><Svg w={12} h={12} stroke="#a0a0a0" sw={1.500}><path d="M1 1l10 10M11 1L1 11" /></Svg></button>
        </div>
      </header>
      <Toolbar />
      <main className="flex">
        <div className="mr-1 w-[403px] shrink-0">
          <MarketWatch />
          <Navigator />
        </div>
        <div className="flex min-w-0 flex-1 flex-col">
          <OptimizationChart />
          <ChartTabs />
        </div>
      </main>
      <StrategyTester />
      <Toolbox />
    </div>
  );
}
